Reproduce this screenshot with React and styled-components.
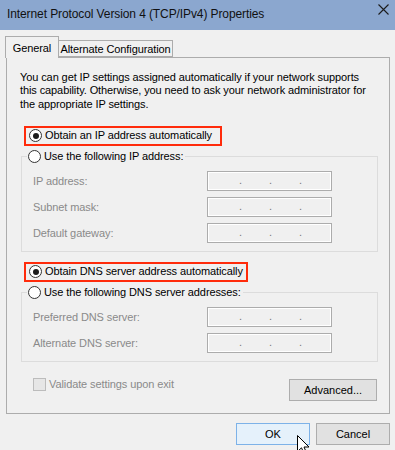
import React from 'react';
import styled, { createGlobalStyle } from 'styled-components';

const GlobalStyle = createGlobalStyle`
  html, body { margin: 0; padding: 0; background: #f0f0f0; }
  body {
    font-family: "Liberation Sans", Arial, sans-serif;
    font-size: 11px;
    letter-spacing: -0.1px;
    color: #000;
  }
  #root { width: 395px; height: 450px; overflow: hidden; }
  * { box-sizing: border-box; }
`

const WINDOW = styled.div`
  position: relative;
  width: 395px;
  height: 450px;
  overflow: hidden;
  background: #f0f0f0;
  display: flex;
  flex-direction: column;
`

const TITLEBAR = styled.div`
  height: 30px;
  flex: none;
  background: #8ba7cf;
  display: flex;
  justify-content: space-between;
  align-items: flex-start;
  padding-left: 7px;
`

const TITLE = styled.div`
  font-size: 12px;
  line-height: 29px;
  color: #111;
  white-space: nowrap;
`

const CLOSE = styled.svg`
  margin: 4px 6px 0 0;
`

const BODY = styled.div`
  padding: 6px 0 0 6px;
  width: 390px;
`

const TABROW = styled.div`
  display: flex;
  align-items: flex-end;
  height: 21px;
  margin-left: -1px;
`

const TAB = styled.div`
  position: relative;
  z-index: ${p => (p.active ? 2 : 1)};
  height: ${p => (p.active ? '22px' : '17px')};
  margin-bottom: ${p => (p.active ? '-1px' : '0')};
  margin-left: ${p => (p.first ? '0' : '-1px')};
  width: ${p => p.w}px;
  border: 1px solid #acacac;
  border-bottom: ${p => (p.active ? 'none' : '1px solid #acacac')};
  background: #f0f0f0;
  display: flex;
  align-items: center;
  justify-content: center;
  white-space: nowrap;
`

const PANEL = styled.div`
  width: 384px;
  border: 1px solid #acacac;
  padding: 13px 11px 12px 14px;
  display: flex;
  flex-direction: column;
  align-items: flex-start;
`

const INTRO = styled.p`
  margin: 0 0 0 -1px;
  line-height: 13.3px;
  white-space: nowrap;
`

const REDBOX = styled.div`
  margin: ${p => p.mt}px 0 0 3px;
  height: 20px;
  border: 2px solid #ff2b0b;
  padding: 0 ${p => p.pr}px 0 3px;
  display: flex;
  align-items: center;
`

const RADIOROW = styled.label`
  display: flex;
  align-items: center;
  gap: 3px;
  line-height: 15px;
  white-space: nowrap;
`

const RADIO = styled.span`
  position: relative;
  width: 13px;
  height: 13px;
  flex: none;
  border: 1px solid #333;
  border-radius: 50%;
  background: #fff;
  &::after {
    content: '';
    display: ${p => (p.checked ? 'block' : 'none')};
    position: absolute;
    left: 2.5px;
    top: 2.5px;
    width: 6px;
    height: 6px;
    border-radius: 50%;
    background: #1b1b1b;
  }
`

const GROUP = styled.fieldset`
  margin: 3.5px 0 0 0;
  width: 357px;
  min-width: 0;
  border: 1px solid #dcdcdc;
  padding: 0 11px 8px 11px;
`

const LEGEND = styled.legend`
  margin-left: -6px;
  padding: 0 2px 0 1px;
`

const FIELDGRID = styled.div`
  display: grid;
  grid-template-columns: 174px 125px;
  row-gap: 6px;
  align-items: center;
  margin-top: 7px;
`

const FIELDLABEL = styled.span`
  color: #8a8a8a;
  white-space: nowrap;
`

const IPFIELD = styled.div`
  width: 125px;
  height: 20px;
  border: 1px solid #acacac;
  box-shadow: inset 0 0 0 1px #fff;
  background: #f0f0f0;
  display: flex;
  padding-left: 31px;
  gap: 27px;
  line-height: 17px;
`

const DOT = styled.span`
  width: 3px;
  text-align: center;
  color: #7a7a7a;
`

const BOTTOMROW = styled.div`
  width: 357px;
  margin-top: 16px;
  padding: 0 1px 0 12px;
  display: flex;
  justify-content: space-between;
  align-items: flex-start;
`

const CHECKROW = styled.label`
  display: flex;
  align-items: center;
  gap: 3px;
  color: #8a8a8a;
  line-height: 13px;
`

const CHECKBOX = styled.span`
  width: 13px;
  height: 13px;
  border: 1px solid #bcbcbc;
  background: #e6e6e6;
`

const BUTTON = styled.button`
  width: ${p => p.w}px;
  height: 22px;
  margin: ${p => p.mt || 0}px 0 0 0;
  padding: 0;
  font: inherit;
  color: #000;
  border: 1px solid ${p => (p.focus ? '#7db2e8' : '#adadad')};
  background: ${p => (p.focus ? '#e5f1fb' : '#e1e1e1')};
`

const BUTTONROW = styled.div`
  width: 384px;
  margin-top: 9px;
  display: flex;
  justify-content: flex-end;
  gap: 6px;
`

const CURSOR = styled.svg`
  position: absolute;
  left: 297px;
  top: 435px;
`

function IpBox() {
  return (
    <IPFIELD>
      <DOT>.</DOT>
      <DOT>.</DOT>
      <DOT>.</DOT>
    </IPFIELD>
  )
}

function Fields({ labels }) {
  return (
    <FIELDGRID>
      {labels.map(l => (
        <React.Fragment key={l}>
          <FIELDLABEL>{l}</FIELDLABEL>
          <IpBox />
        </React.Fragment>
      ))}
    </FIELDGRID>
  )
}

export default function App() {
  return (
    <WINDOW>
      <GlobalStyle />
      <TITLEBAR>
        <TITLE>Internet Protocol Version 4 (TCP/IPv4) Properties</TITLE>
        <CLOSE width="11" height="11" viewBox="0 0 11 11">
          <path d="M0.5 0.5 L10.5 10.5 M10.5 0.5 L0.5 10.5" stroke="#1c1c1c" strokeWidth="1.1" fill="none" />
        </CLOSE>
      </TITLEBAR>

      <BODY>
        <TABROW>
          <TAB active first w={54}>General</TAB>
          <TAB w={115}>Alternate Configuration</TAB>
        </TABROW>

        <PANEL>
          <INTRO>
            You can get IP settings assigned automatically if your network supports<br />
            this capability. Otherwise, you need to ask your network administrator for<br />
            the appropriate IP settings.
          </INTRO>

          <REDBOX mt={15} pr={8}>
            <RADIOROW><RADIO checked />Obtain an IP address automatically</RADIOROW>
          </REDBOX>

          <GROUP>
            <LEGEND>
              <RADIOROW><RADIO />Use the following IP address:</RADIOROW>
            </LEGEND>
            <Fields labels={['IP address:', 'Subnet mask:', 'Default gateway:']} />
          </GROUP>

          <REDBOX mt={9.5} pr={3}>
            <RADIOROW><RADIO checked />Obtain DNS server address automatically</RADIOROW>
          </REDBOX>

          <GROUP>
            <LEGEND>
              <RADIOROW><RADIO />Use the following DNS server addresses:</RADIOROW>
            </LEGEND>
            <Fields labels={['Preferred DNS server:', 'Alternate DNS server:']} />
          </GROUP>

          <BOTTOMROW>
            <CHECKROW><CHECKBOX />Validate settings upon exit</CHECKROW>
            <BUTTON w={88} mt={1}>Advanced...</BUTTON>
          </BOTTOMROW>
        </PANEL>

        <BUTTONROW>
          <BUTTON w={74} focus>OK</BUTTON>
          <BUTTON w={74}>Cancel</BUTTON>
        </BUTTONROW>
      </BODY>

      <CURSOR width="13" height="20" viewBox="0 0 13 20">
        <path d="M0.5 0.5 L0.5 16.5 L4.5 12.8 L7.2 19 L9.6 18 L7 12 L12 12 Z" fill="#fff" stroke="#000" strokeWidth="1" strokeLinejoin="miter" />
      </CURSOR>
    </WINDOW>
  )
}
